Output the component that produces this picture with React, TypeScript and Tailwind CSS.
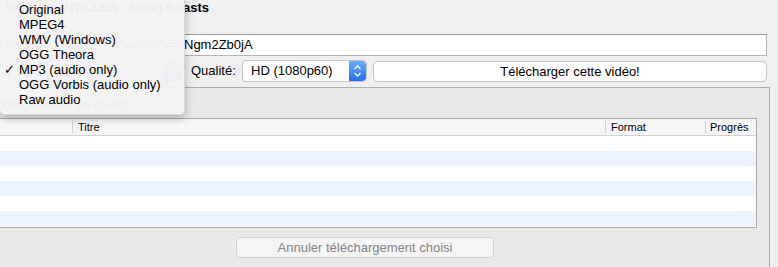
const formats = [
  "Original",
  "MPEG4",
  "WMV (Windows)",
  "OGG Theora",
  "MP3 (audio only)",
  "OGG Vorbis (audio only)",
  "Raw audio",
];

function Stepper() {
  return (
    <div className="w-[17px] self-stretch rounded-r-[4px] bg-gradient-to-b from-[#6aaefc] to-[#1f6ff1] flex items-center justify-center">
      <svg width="9" height="14" viewBox="0 0 9 14" fill="none">
        <path d="M1.5 5 L4.5 2 L7.5 5" stroke="white" strokeWidth="1.3" />
        <path d="M1.5 9 L4.5 12 L7.5 9" stroke="white" strokeWidth="1.3" />
      </svg>
    </div>
  );
}

export default function App() {
  const rows = [0, 1, 2, 3, 4, 5];

  return (
    <div className="relative w-[778px] h-[267px] overflow-hidden bg-[#f0f0f0] font-['Liberation_Sans',Arial,sans-serif] text-[13px] text-black">
      {/* Titre */}
      <div className="flex h-[16px] leading-[15px]">
        <div className="w-[209px] flex justify-end overflow-hidden whitespace-nowrap font-bold">
          NO ESSENTILLES - Gang Beasts
        </div>
      </div>

      {/* URL */}
      <div className="flex mt-[18px] mr-[11px] h-[22px]">
        <div className="flex-1 flex items-center bg-white border border-[#b3b3b3] border-t-[#9c9c9c] border-l-0 whitespace-nowrap overflow-hidden">
          <div className="w-[184px] flex justify-end overflow-hidden">
            https://www.youtube.com/watch?v=h
          </div>
          <span>Ngm2Zb0jA</span>
        </div>
      </div>

      {/* Format / Qualité */}
      <div className="flex items-center mt-[4px] mr-[11px] h-[22px]">
        <div className="w-[5px] flex justify-end overflow-hidden whitespace-nowrap">Format:</div>
        <div className="ml-[3px] w-[175px] h-[21px] flex bg-white border border-[#c6c6c6] rounded-[4px]">
          <div className="flex-1 pl-[7px] leading-[19px]">MP3 (audio only)</div>
          <Stepper />
        </div>
        <span className="ml-[8px] w-[51px]">Qualité:</span>
        <div className="w-[125px] h-[22px] flex bg-white border border-[#c6c6c6] rounded-[4px]">
          <div className="flex-1 pl-[8px] leading-[20px]">HD (1080p60)</div>
          <Stepper />
        </div>
        <button className="ml-[6px] flex-1 h-[21px] bg-white border border-[#c4c4c4] rounded-[5px] text-[13px] leading-[19px] text-center">
          Télécharger cette vidéo!
        </button>
      </div>

      {/* Groupe téléchargements */}
      <div className="mt-[5px] mr-[8px] h-[200px] bg-[#e9e9e9] border-t border-r border-[#ababab] pr-[12px]">
        <div className="h-[30px] flex items-start pt-[9px] leading-[15px]">
          <div className="w-[129px] flex justify-end overflow-hidden whitespace-nowrap">
            Téléchargements en cours:
          </div>
        </div>

        <div className="bg-white border border-[#a9a9a9] border-l-0">
          <div className="flex h-[17px] bg-[#f6f6f6] border-b border-[#d3d3d3] text-[11px] leading-[16px]">
            <div className="w-[72px]" />
            <div className="flex-1 flex items-center">
              <span className="w-px h-[12px] bg-[#d0d0d0]" />
              <span className="pl-[5px]">Titre</span>
            </div>
            <div className="w-[100px] flex items-center">
              <span className="w-px h-[12px] bg-[#d0d0d0]" />
              <span className="pl-[5px]">Format</span>
            </div>
            <div className="w-[51px] flex items-center">
              <span className="w-px h-[12px] bg-[#d0d0d0]" />
              <span className="pl-[4px]">Progrès</span>
            </div>
          </div>
          {rows.map((r) => (
            <div
              key={r}
              className={r % 2 === 0 ? "h-[15px] bg-white" : "h-[15px] bg-[#edf3fe]"}
            />
          ))}
          <div className="h-[1px] bg-white" />
        </div>

        <div className="flex pl-[236px] mt-[9px]">
          <button className="w-[258px] h-[21px] bg-[#f5f5f5] border border-[#d2d2d2] rounded-[4px] text-[13px] leading-[19px] text-[#858585]">
            Annuler téléchargement choisi
          </button>
        </div>
      </div>

      {/* Menu déroulant ouvert */}
      <div className="absolute left-0 top-0 w-[185px] pt-[2px] pb-[7px] bg-[#f3f3f3]/[0.97] rounded-b-[5px] shadow-[0_3px_10px_rgba(0,0,0,0.28)] border-r border-b border-[#d8d8d8]">
        {formats.map((f) => (
          <div key={f} className="relative h-[15px] leading-[15px] pl-[19px] whitespace-nowrap">
            {f === "MP3 (audio only)" && (
              <span className="absolute left-[4px] top-0 text-[13px]">✓</span>
            )}
            {f}
          </div>
        ))}
      </div>
    </div>
  );
}
